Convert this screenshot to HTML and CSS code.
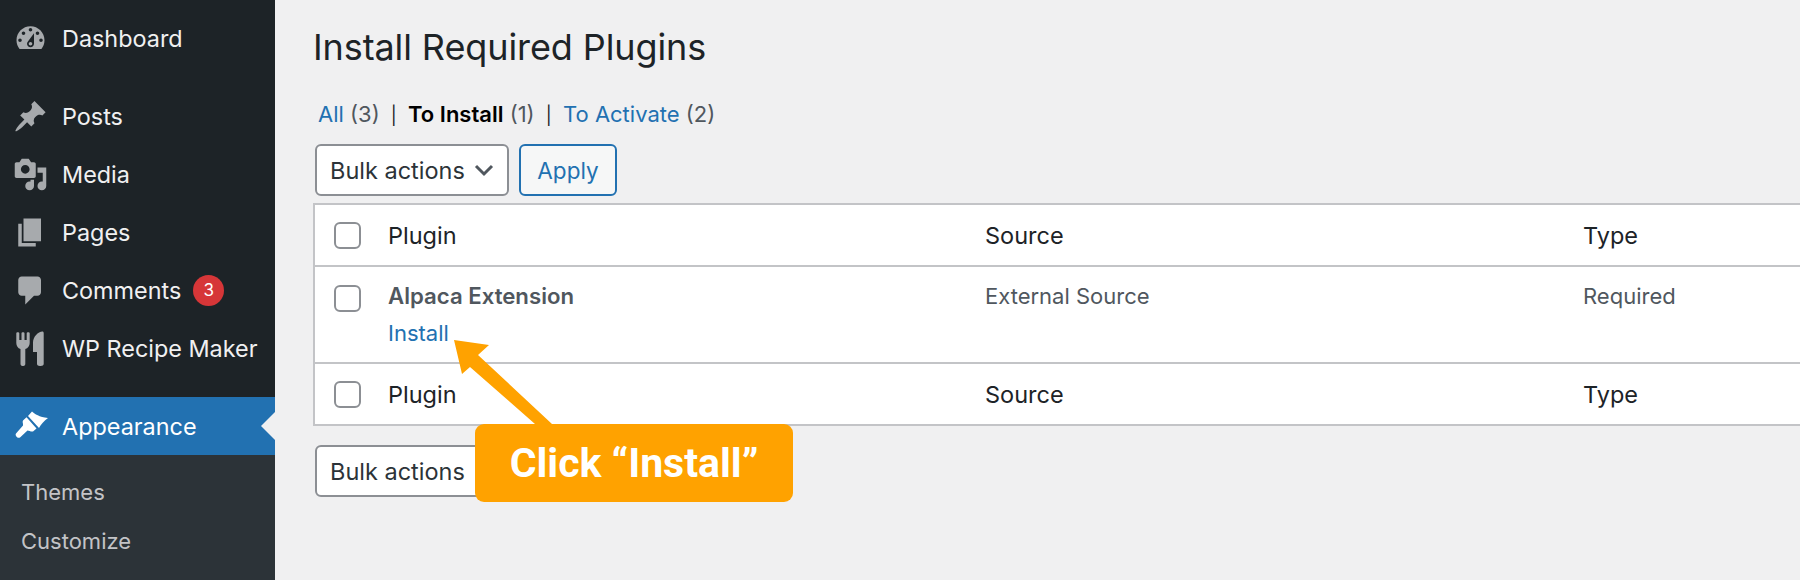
FILE: index.html
```html
<!DOCTYPE html>
<html lang="en">
<head>
    <meta charset="UTF-8">
    <title>Install Required Plugins</title>
    <link rel="stylesheet" href="styles.css">
</head>
<body>
    <div class="sidebar">
        <ul class="menu">
            <li class="menu-item">
                <svg class="menu-icon" viewBox="0 0 20 20"><path fill-rule="evenodd" d="M3.76 16h12.48c1.1-1.37 1.76-3.11 1.76-5 0-4.42-3.58-8-8-8s-8 3.58-8 8c0 1.89.66 3.63 1.76 5zM10 4c.55 0 1 .45 1 1s-.45 1-1 1-1-.45-1-1 .45-1 1-1zM6 6c.55 0 1 .45 1 1s-.45 1-1 1-1-.45-1-1 .45-1 1-1zm8 0c.55 0 1 .45 1 1s-.45 1-1 1-1-.45-1-1 .45-1 1-1zm-5.37 5.55L12 7v6c0 1.1-.9 2-2 2s-2-.9-2-2c0-.57.24-1.08.63-1.45zM4 10c.55 0 1 .45 1 1s-.45 1-1 1-1-.45-1-1 .45-1 1-1zm12 0c.55 0 1 .45 1 1s-.45 1-1 1-1-.45-1-1 .45-1 1-1zm-5 3c0-.55-.45-1-1-1s-1 .45-1 1 .45 1 1 1 1-.45 1-1z"/></svg>
                Dashboard
            </li>
            <li class="menu-item menu-gap">
                <svg class="menu-icon" viewBox="0 0 20 20"><path d="M10.44 3.02l1.82-1.82 6.36 6.35-1.83 1.82c-1.05-.68-2.48-.57-3.41.36l-.75.75c-.92.93-1.04 2.35-.35 3.41l-1.83 1.82-2.41-2.41-2.8 2.79c-.42.42-3.38 2.71-3.8 2.29s1.86-3.39 2.28-3.81l2.79-2.79L4.1 9.36l1.83-1.82c1.05.69 2.48.57 3.4-.36l.75-.75c.93-.92 1.05-2.35.36-3.41z"/></svg>
                Posts
            </li>
            <li class="menu-item">
                <svg class="menu-icon" viewBox="0 0 20 20"><path fill-rule="evenodd" d="M13 11V4c0-.55-.45-1-1-1h-1.67L9 1H5L3.67 3H2c-.55 0-1 .45-1 1v7c0 .55.45 1 1 1h10c.55 0 1-.45 1-1zM7 4.5c1.38 0 2.5 1.12 2.5 2.5S8.38 9.5 7 9.5 4.5 8.38 4.5 7 5.62 4.5 7 4.5zM14 6h5v10.5c0 1.38-1.12 2.5-2.5 2.5S14 17.88 14 16.5s1.12-2.5 2.5-2.5c.17 0 .34.02.5.05V9h-3V6zm-4 8.05V13h2v3.5c0 1.38-1.12 2.5-2.5 2.5S7 17.88 7 16.5 8.12 14 9.5 14c.17 0 .34.02.5.05z"/></svg>
                Media
            </li>
            <li class="menu-item">
                <svg class="menu-icon" viewBox="0 0 20 20"><path d="M6 15V2h10v13H6zm-1 1h8v2H3V5h2v11z"/></svg>
                Pages
            </li>
            <li class="menu-item">
                <svg class="menu-icon" viewBox="0 0 20 20"><path d="M5 2h9c1.1 0 2 .9 2 2v7c0 1.1-.9 2-2 2h-2l-5 5v-5H5c-1.1 0-2-.9-2-2V4c0-1.1.9-2 2-2z"/></svg>
                Comments
                <span class="badge">3</span>
            </li>
            <li class="menu-item">
                <svg class="menu-icon" viewBox="0 0 35 35"><path d="M3.3 2.200c0-1.300 3-1.300 3 0V9h2.200V2.200c0-1.300 3-1.300 3 0V9h2.200V2.200c0-1.300 3-1.300 3 0V12c0 3-1.800 5.200-4.400 6V33c0 2.700-4.800 2.700-4.800 0V18c-2.600-.8-4.200-3-4.200-6zM30.700 2v31c0 2.700-6.700 2.700-6.700 0V21h-4V11.500C20 6 25 .5 29.500.5c.7 0 1.200.7 1.200 1.500z"/></svg>
                WP Recipe Maker
            </li>
            <li class="menu-item menu-gap menu-current">
                <svg class="menu-icon" viewBox="0 0 35 35"><path d="M19 2.500C22 5 26 8 35 9c-4 3-7 6-9 10L15 7zM13.500 8.200L23.500 19.500 20 22.500c-2 .5-4-1-5.500-1L7 28.500c-2 1.500-5.500-2-4-4L10 16.500c.5-1.500-1-3.500 0-5z"/></svg>
                Appearance
            </li>
        </ul>
        <ul class="submenu">
            <li>Themes</li>
            <li>Customize</li>
        </ul>
    </div>

    <div class="content">
        <h1>Install Required Plugins</h1>

        <div class="filters">
            <a href="#">All</a> <span class="count">(3)</span>
            <span class="sep">|</span>
            <b>To Install</b> <span class="count">(1)</span>
            <span class="sep">|</span>
            <a href="#">To Activate</a> <span class="count">(2)</span>
        </div>

        <div class="actions">
            <div class="select">
                Bulk actions
                <svg class="chevron" viewBox="0 0 20 14"><path d="M2 3l8 8 8-8"/></svg>
            </div>
            <button class="apply">Apply</button>
        </div>

        <table class="plugins">
            <colgroup>
                <col class="col-check">
                <col class="col-plugin">
                <col class="col-source">
                <col>
            </colgroup>
            <thead>
                <tr>
                    <th><span class="checkbox"></span></th>
                    <th>Plugin</th>
                    <th>Source</th>
                    <th>Type</th>
                </tr>
            </thead>
            <tbody>
                <tr>
                    <td><span class="checkbox checkbox-row"></span></td>
                    <td>
                        <strong>Alpaca Extension</strong>
                        <a class="row-action" href="#">Install</a>
                    </td>
                    <td>External Source</td>
                    <td>Required</td>
                </tr>
            </tbody>
            <tfoot>
                <tr>
                    <th><span class="checkbox"></span></th>
                    <th>Plugin</th>
                    <th>Source</th>
                    <th>Type</th>
                </tr>
            </tfoot>
        </table>

        <div class="actions actions-bottom">
            <div class="select">
                Bulk actions
                <svg class="chevron" viewBox="0 0 20 14"><path d="M2 3l8 8 8-8"/></svg>
            </div>
        </div>
    </div>

    <!-- annotation on top of the screenshot -->
    <svg class="arrow" viewBox="0 0 110 90" width="110" height="90"><path d="M4 0L39 5 28 15 102 84H85L20 27 12 34z"/></svg>
    <div class="callout">Click “Install”</div>
</body>
</html>
```

FILE: styles.css
```css
* {
    box-sizing: border-box;
}
body {
    display: flex;
    margin: 0;
    height: 580px;
    overflow: hidden;
    background-color: #f0f0f1;
    font-family: Inter, "Liberation Sans", sans-serif;
    color: #1d2327;
}
a {
    color: #2271b1;
    text-decoration: none;
}

/* sidebar */
.sidebar {
    flex: 0 0 275px;
    background-color: #1d2327;
    padding-top: 9px;
}
.menu, .submenu {
    list-style: none;
    margin: 0;
    padding: 0;
}
.menu-item {
    position: relative;
    display: flex;
    align-items: center;
    height: 58px;
    padding-left: 13px;
    font-size: 23.4px;
    color: #f0f0f1;
}
.menu-gap {
    margin-top: 20px;
}
.menu-icon {
    flex: none;
    width: 35px;
    height: 35px;
    margin-right: 14px;
    fill: #a7aaad;
}
.menu-current {
    background-color: #2271b1;
    color: #fff;
}
.menu-current .menu-icon {
    fill: #fff;
}
.menu-current::after {
    content: "";
    position: absolute;
    right: 0;
    top: 15px;
    border: 14px solid transparent;
    border-right-color: #f0f0f1;
    border-left-width: 0;
}
.badge {
    display: flex;
    align-items: center;
    justify-content: center;
    width: 31px;
    height: 31px;
    margin-left: 12px;
    border-radius: 50%;
    background-color: #d63638;
    color: #fff;
    font-size: 17px;
}
.submenu {
    height: 130px;
    padding-top: 13px;
    background-color: #2c3338;
}
.submenu li {
    height: 48.5px;
    line-height: 48.5px;
    padding-left: 21px;
    font-size: 22px;
    color: #c3c4c7;
}

/* main column */
.content {
    flex: 1;
    min-width: 0;
    padding-left: 38px;
}
h1 {
    margin: 0;
    padding-top: 23px;
    font-size: 36px;
    line-height: 48px;
    font-weight: 400;
    letter-spacing: -0.1px;
}
.filters {
    margin-top: 28px;
    padding-left: 5px;
    height: 30px;
    line-height: 30px;
    font-size: 22px;
    color: #50575e;
    white-space: nowrap;
}
.filters b {
    color: #000;
    font-weight: 600;
}
.sep {
    margin: 0 5px;
    font-size: 18px;
    color: #1d2327;
}
.actions {
    display: flex;
    gap: 10px;
    margin: 15px 0 7px 2px;
}
.actions-bottom {
    margin-top: 19px;
}
.select {
    display: flex;
    align-items: center;
    justify-content: space-between;
    width: 194px;
    height: 52px;
    padding: 0 13px;
    background-color: #fff;
    border: 2px solid #8c8f94;
    border-radius: 6px;
    font-size: 23.5px;
    color: #2c3338;
}
.chevron {
    width: 20px;
    height: 14px;
    fill: none;
    stroke: #50575e;
    stroke-width: 3;
}
.apply {
    width: 98px;
    height: 52px;
    background-color: #f6f7f7;
    border: 2px solid #2271b1;
    border-radius: 6px;
    color: #2271b1;
    font-family: inherit;
    font-size: 22.5px;
}

/* table */
.plugins {
    width: 100%;
    table-layout: fixed;
    border-collapse: collapse;
    background-color: #fff;
    border-left: 2px solid #c3c4c7;
    font-size: 23.5px;
}
.col-check {
    width: 74px;
}
.col-plugin {
    width: 597px;
}
.col-source {
    width: 598px;
}
.plugins th {
    height: 62px;
    padding: 0;
    text-align: left;
    font-weight: 400;
    vertical-align: middle;
}
.plugins td {
    height: 97px;
    padding: 14px 0 0;
    vertical-align: top;
    color: #50575e;
    font-size: 22px;
    line-height: 30px;
}
.plugins thead tr,
.plugins tbody tr,
.plugins tfoot tr {
    border-top: 2px solid #c3c4c7;
}
.plugins tfoot tr {
    border-bottom: 2px solid #c3c4c7;
}
.plugins strong {
    display: block;
    font-size: 22.2px;
    font-weight: 600;
    color: #50575e;
}
.row-action {
    display: block;
    margin-top: 7px;
}
.checkbox {
    display: block;
    width: 27px;
    height: 27px;
    margin-left: 19px;
    background-color: #fff;
    border: 2px solid #8c8f94;
    border-radius: 6px;
}
.checkbox-row {
    margin-top: 4px;
}

/* annotation */
.arrow {
    position: absolute;
    left: 450px;
    top: 340px;
    fill: #ffa200;
}
.callout {
    position: absolute;
    left: 475px;
    top: 424px;
    width: 318px;
    height: 78px;
    line-height: 78px;
    text-align: center;
    background-color: #ffa200;
    border-radius: 9px;
    color: #fff;
    font-family: Roboto, sans-serif;
    font-size: 41px;
    font-weight: 700;
    white-space: nowrap;
}
```
